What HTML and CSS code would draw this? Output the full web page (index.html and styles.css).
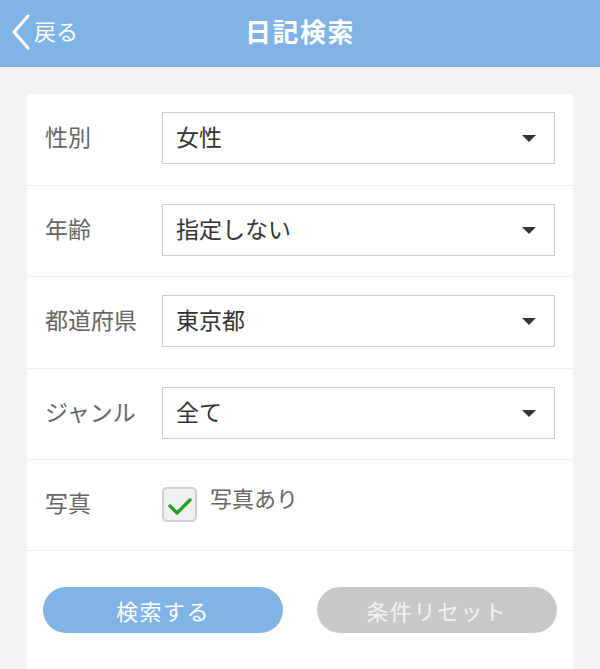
FILE: index.html
```html
<!DOCTYPE html>
<html lang="ja">
  <head>
    <meta charset="UTF-8" />
    <meta name="viewport" content="width=device-width, initial-scale=1.0" />
    <title>日記検索</title>
    <link rel="stylesheet" href="styles.css">
  </head>
  <body>
    <header class="header">
      <a class="back" href="#">
        <svg class="back-icon" width="20" height="36" viewBox="0 0 20 36">
          <path d="M17 2 L3 18 L17 34" fill="none" stroke="#fff" stroke-width="3" stroke-linecap="round" stroke-linejoin="round" />
        </svg>
        <span class="back-text">戻る</span>
      </a>
      <h1 class="title">日記検索</h1>
    </header>

    <main class="card">
      <div class="row row-tall">
        <div class="label">性別</div>
        <div class="select"><span>女性</span><i class="caret"></i></div>
      </div>
      <div class="row">
        <div class="label">年齢</div>
        <div class="select"><span>指定しない</span><i class="caret"></i></div>
      </div>
      <div class="row row-tall">
        <div class="label">都道府県</div>
        <div class="select"><span>東京都</span><i class="caret"></i></div>
      </div>
      <div class="row">
        <div class="label">ジャンル</div>
        <div class="select"><span>全て</span><i class="caret"></i></div>
      </div>
      <div class="row">
        <div class="label">写真</div>
        <label class="check">
          <span class="box">
            <svg width="26" height="20" viewBox="0 0 26 20">
              <path d="M3 9 L10 16 L23 3" fill="none" stroke="#19a619" stroke-width="3.2" stroke-linecap="round" stroke-linejoin="round" />
            </svg>
          </span>
          <span class="check-text">写真あり</span>
        </label>
      </div>
      <div class="buttons">
        <button class="btn btn-search">検索する</button>
        <button class="btn btn-reset">条件リセット</button>
      </div>
    </main>
  </body>
</html>
```

FILE: styles.css
```css
* {
  margin: 0;
  padding: 0;
  box-sizing: border-box;
  font-family: "Noto Sans CJK JP", "Noto Sans", sans-serif;
}
body {
  background: #f2f2f2;
  height: 669px;
  overflow: hidden;
  display: flex;
  flex-direction: column;
}
.header {
  height: 67px;
  background: #80b4e6;
  border-bottom: 1px solid #76a8d8;
  display: flex;
  align-items: center;
  justify-content: center;
  position: relative;
}
.back {
  position: absolute;
  left: 11px;
  top: 14px;
  display: flex;
  align-items: center;
  color: #fff;
  text-decoration: none;
  font-size: 22px;
}
.back-icon {
  margin-right: 3px;
}
.back-text {
  margin-top: -5px;
}
.title {
  color: #fff;
  font-size: 26px;
  font-weight: 700;
  letter-spacing: 1.5px;
  margin-top: -6px;
}
.card {
  flex: 1;
  margin: 27px 27px 0;
  background: #fff;
}
.row {
  height: 91px;
  display: flex;
  align-items: flex-start;
  padding: 18px 18px 0;
  border-bottom: 1px solid #eeeeee;
}
.row-tall {
  height: 92px;
}
.label {
  width: 117px;
  height: 52px;
  display: flex;
  align-items: center;
  font-size: 23px;
  color: #666;
  padding-bottom: 5px;
}
.select {
  flex: 1;
  height: 52px;
  border: 1px solid #cccccc;
  display: flex;
  align-items: center;
  justify-content: space-between;
  padding: 0 18px 0 13px;
  font-size: 23px;
  color: #333;
}
.select span {
  margin-top: -5px;
}
.caret {
  width: 0;
  height: 0;
  border-left: 7px solid transparent;
  border-right: 7px solid transparent;
  border-top: 7px solid #333;
}
.check {
  display: flex;
  align-items: flex-start;
  margin-top: 9px;
}
.box {
  width: 35px;
  height: 35px;
  border: 2px solid #cfcfcf;
  border-radius: 5px;
  background: #f0f0f0;
  display: flex;
  align-items: center;
  justify-content: center;
  padding-top: 4px;
}
.check-text {
  font-size: 22px;
  color: #666;
  margin-left: 13px;
  margin-top: -6px;
}
.buttons {
  display: flex;
  justify-content: space-between;
  padding: 36px 16px 0;
}
.btn {
  width: 240px;
  height: 46px;
  border: none;
  border-radius: 23px;
  color: #fff;
  font-size: 22px;
  letter-spacing: 1.5px;
}
.btn-search {
  background: #80b4e6;
}
.btn-reset {
  background: #c8c8c8;
  color: #f4f4f4;
}
```
